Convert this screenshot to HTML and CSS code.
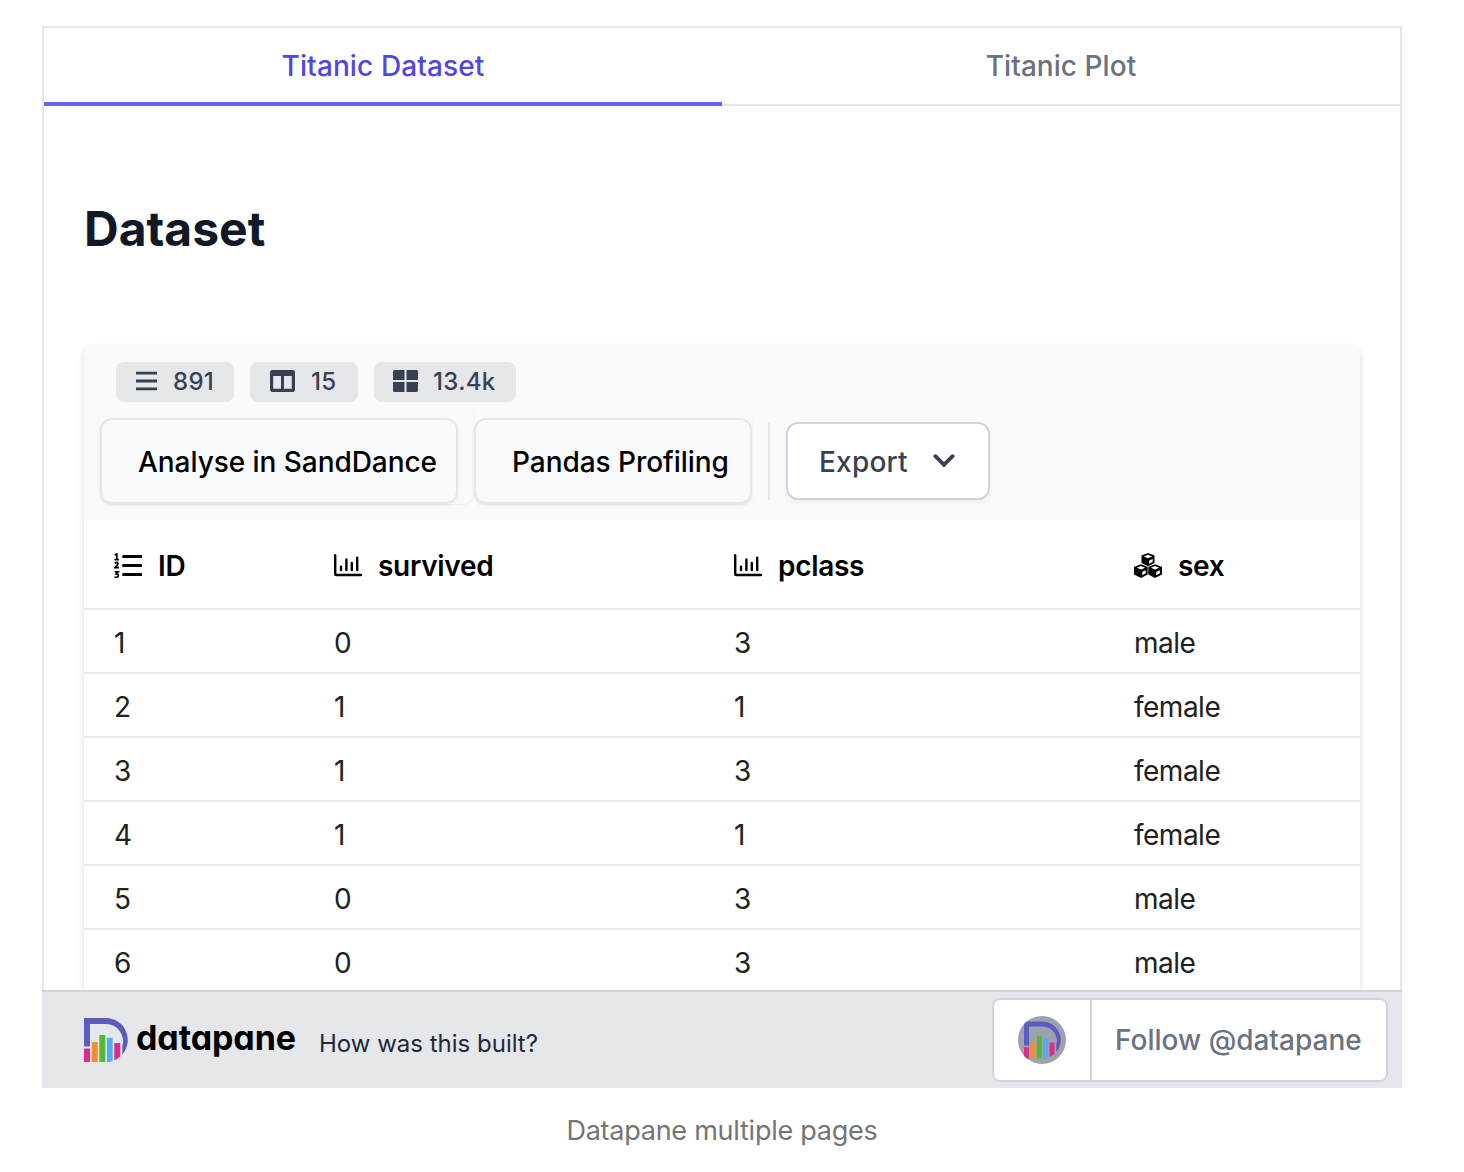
FILE: index.html
```html
<!DOCTYPE html>
<html lang="en">
<head>
<meta charset="utf-8">
<title>Datapane multiple pages</title>
<link rel="stylesheet" href="styles.css">
</head>
<body>
<svg class="defs" aria-hidden="true">
  <symbol id="chart" viewBox="0 0 28 24"><path d="M1.2 1.2V20q0 1 1 1H27" fill="none" stroke="currentColor" stroke-width="2.4" stroke-linecap="round" stroke-linejoin="round"/><path d="M7 12.8V16M12.4 5.4V16M17.8 9V16M23.2 3.8V16" fill="none" stroke="currentColor" stroke-width="2.4" stroke-linecap="round"/></symbol>
  <symbol id="mark" viewBox="0 0 44 44"><path d="M0 0H22A22 22 0 0 1 38.3 36.5V28A17 17 0 0 0 22 6H6V28.600H0Z" fill="#5c5bc0"/><path d="M0 30.500H6V44H0Z" fill="#d92f8a"/><path d="M7.800 24H13.700V44H7.800Z" fill="#f28c35"/><path d="M15.300 17H21.300V44H15.300Z" fill="#58b637"/><path d="M22.900 19.700H28.700V43L26 44H22.900Z" fill="#4faef8"/><path d="M30.300 25H36.300V38.500Q33.500 41 30.300 42.300Z" fill="#d92f8a"/></symbol>
</svg>
<figure class="figure">
  <div class="frame">
    <nav class="tabs"><a class="tab active">Titanic Dataset</a><a class="tab">Titanic Plot</a></nav>
    <main class="content">
      <h1 class="heading">Dataset</h1>
      <section class="card">
        <header class="tools">
          <div class="badges">
            <span class="badge"><svg class="badge-icon rows-icon" viewBox="0 0 22 20"><path d="M0 1.800H22M0 10H22M0 18.200H22" stroke="currentColor" stroke-width="3"/></svg>891</span>
            <span class="badge"><svg class="badge-icon" viewBox="0 0 25 22"><path fill="currentColor" fill-rule="evenodd" d="M2.500 0H22.500Q25 0 25 2.500V19.500Q25 22 22.500 22H2.500Q0 22 0 19.500V2.500Q0 0 2.500 0ZM3.200 6V18.800H11V6ZM14 6V18.800H21.800V6Z"/></svg>15</span>
            <span class="badge"><svg class="badge-icon grid-icon" viewBox="0 0 25 22"><path fill="currentColor" d="M1.500 0H11.500V10H0V1.500Q0 0 1.500 0ZM13.500 0H23.500Q25 0 25 1.500V10H13.500ZM0 12H11.500V22H1.500Q0 22 0 20.500ZM13.500 12H25V20.500Q25 22 23.500 22H13.500Z"/></svg>13.4k</span>
          </div>
          <div class="actions">
            <div class="action-wrap wide"><button class="action sand">Analyse in SandDance</button></div>
            <div class="action-wrap"><button class="action pandas">Pandas Profiling</button></div>
            <span class="separator"></span>
            <button class="export">Export<svg class="chevron" viewBox="0 0 20 14"><path d="M2 3L10 11L18 3" fill="none" stroke="currentColor" stroke-width="3.600" stroke-linecap="round" stroke-linejoin="miter"/></svg></button>
          </div>
        </header>
        <div class="table">
          <div class="row head">
            <div class="cell"><svg class="col-icon" viewBox="0 0 28 26"><path d="M9.500 3.500H27M9.500 12.500H27M9.500 21.500H27" stroke="currentColor" stroke-width="3" stroke-linecap="round"/><path d="M.8 2L2.800 1V6.400M.5 6.700H5M.8 10.300Q3.600 8.400 4 10.600Q4 11.800 1 14.600H5M.8 18.800H4.200L2.200 21Q4.500 21 4.300 22.800Q3.600 25 .5 24" fill="none" stroke="currentColor" stroke-width="1.700"/></svg>ID</div>
            <div class="cell"><svg class="col-icon"><use href="#chart"/></svg>survived</div>
            <div class="cell"><svg class="col-icon"><use href="#chart"/></svg>pclass</div>
            <div class="cell"><svg class="col-icon" viewBox="0 0 28 26"><g fill="#000"><path d="M14 0L20.500 2.600V10L14 13.200L7.500 10V2.600Z"/><path d="M7 11.200L13.700 14V21.500L7 25L0 21.500V14Z"/><path d="M21 11.200L28 14V21.500L21 25L14.300 21.500V14Z"/></g><g fill="#fff"><path d="M14 1.800L18.200 3.500L14 5.200L9.800 3.500ZM15.200 7.500L18.700 6V9L15.200 10.700Z"/><path d="M7 13L11.200 14.700L7 16.500L2.800 14.700ZM8.300 18.700L11.700 17.200V20.300L8.300 22.200Z"/><path d="M21 13L25.200 14.700L21 16.500L16.800 14.700ZM22.300 18.700L25.900 17.200V20.300L22.300 22.200Z"/></g></svg>sex</div>
          </div>
          <div class="row"><div class="cell">1</div><div class="cell">0</div><div class="cell">3</div><div class="cell">male</div></div>
          <div class="row"><div class="cell">2</div><div class="cell">1</div><div class="cell">1</div><div class="cell">female</div></div>
          <div class="row"><div class="cell">3</div><div class="cell">1</div><div class="cell">3</div><div class="cell">female</div></div>
          <div class="row"><div class="cell">4</div><div class="cell">1</div><div class="cell">1</div><div class="cell">female</div></div>
          <div class="row"><div class="cell">5</div><div class="cell">0</div><div class="cell">3</div><div class="cell">male</div></div>
          <div class="row"><div class="cell">6</div><div class="cell">0</div><div class="cell">3</div><div class="cell">male</div></div>
        </div>
      </section>
    </main>
    <footer class="footer">
      <svg class="logo"><use href="#mark"/></svg>
      <span class="wordmark">datapane</span>
      <a class="built">How was this built?</a>
      <div class="follow">
        <span class="avatar-box"><span class="avatar"><svg class="avatar-mark"><use href="#mark"/></svg></span></span>
        <span class="follow-text">Follow @datapane</span>
      </div>
    </footer>
  </div>
  <figcaption class="caption">Datapane multiple pages</figcaption>
</figure>
</body>
</html>
```
FILE: styles.css
```css
* { box-sizing: border-box; }
body { margin: 0; background: #fff; font-family: Inter, "Liberation Sans", sans-serif; }
button { font: inherit; }
svg { display: block; flex: none; }
.defs { display: none; }
.figure { width: 1360px; margin: 26px 0 0 42px; }
.frame { display: flex; flex-direction: column; height: 1062px; border: 2px solid #e5e7eb; border-bottom: 0; }
.tabs { display: flex; height: 78px; flex: none; }
.tab { flex: 1; display: flex; justify-content: center; padding-top: 17px; border-bottom: 2px solid #e5e7eb; color: #6b7280; font-size: 28px; line-height: 42px; font-weight: 550; letter-spacing: .05px; }
.tab.active { color: #4f46e5; border-bottom: 4px solid #6366f1; letter-spacing: .12px; }
.content { flex: 1; min-height: 0; overflow: hidden; padding: 93px 40px 0; }
.heading { margin: 0 0 87px; color: #111827; font-size: 48px; line-height: 60px; font-weight: 700; }
.card { height: 700px; border-radius: 8px; box-shadow: 0 2px 6px rgba(0,0,0,.14); }
.tools { height: 174px; padding: 16px 16px 0; background: #f9fafb; border-radius: 8px 8px 0 0; }
.badges { display: flex; gap: 16px; padding-left: 16px; }
.badge { display: flex; align-items: center; height: 40px; padding: 0 20px; border-radius: 8px; background: #e5e7eb; color: #374151; font-size: 24px; font-weight: 500; line-height: 40px; letter-spacing: .3px; }
.badge-icon { width: 25px; height: 22px; margin: -2px 16px 0 0; }
.badge:nth-child(2) { width: 108px; }
.rows-icon { width: 21px; height: 20px; }
.grid-icon { margin: -2px 15px 0 -1px; }
.actions { display: flex; height: 102px; align-items: flex-end; }
.action-wrap { height: 102px; padding-top: 16px; border-radius: 12px; box-shadow: 0 1px 2px rgba(0,0,0,.06); }
.wide { width: 374px; }
.action { display: block; height: 86px; padding: 2px 20px 0 36px; border: 2px solid #e5e7eb; border-radius: 12px; background: #f9fafb; color: #000; font-size: 28px; font-weight: 500; text-align: left; white-space: nowrap; letter-spacing: -.05px; box-shadow: 0 2px 4px rgba(0,0,0,.05); }
.sand { width: 358px; }
.pandas { width: 278px; }
.separator { width: 2px; height: 78px; margin: 0 16px 4px; background: #e5e7eb; }
.export { display: flex; align-items: center; width: 204px; height: 78px; margin-bottom: 4px; padding: 2px 31px 0; border: 2px solid #d1d5db; border-radius: 12px; background: #fff; color: #374151; font-size: 28px; font-weight: 500; letter-spacing: .2px; box-shadow: 0 2px 4px rgba(0,0,0,.06); }
.chevron { width: 22px; height: 15px; margin: -3px 0 0 25px; }
.row { display: grid; grid-template-columns: 220px 400px 400px 1fr; height: 64px; border-bottom: 2px solid #ededee; color: #212121; font-size: 28px; letter-spacing: -.5px; }
.head { height: 90px; color: #000; font-weight: 600; letter-spacing: -.3px; }
.cell { display: flex; align-items: center; padding: 4px 0 0 30px; }
.head .cell { padding-top: 4px; }
.col-icon { width: 28px; height: 26px; margin-right: 16px; margin-top: 0; }
.footer { flex: none; display: flex; align-items: center; height: 98px; margin: 0 -2px; padding: 0 14px 0 42px; border-top: 2px solid #d1d5db; background: #e5e7eb; }
.logo { width: 44px; height: 44px; }
.wordmark { width: 160px; margin: -4px 0 0 8px; color: #000; font-size: 34px; font-weight: 650; font-feature-settings: "cv11" 1; line-height: 44px; letter-spacing: -.1px; }
.built { margin: 6px 0 0 23px; color: #1f2937; font-size: 24px; letter-spacing: 0; }
.follow { display: flex; width: 396px; height: 84px; margin-left: auto; border: 2px solid #d1d5db; border-radius: 8px; background: #fff; overflow: hidden; }
.avatar-box { display: flex; align-items: center; justify-content: center; width: 98px; border-right: 2px solid #d1d5db; }
.avatar { display: flex; align-items: center; justify-content: center; width: 48px; height: 48px; border-radius: 50%; background: #9ca3af; overflow: hidden; }
.avatar-mark { width: 37px; height: 38px; }
.follow-text { display: flex; align-items: center; padding-left: 23px; color: #6b7280; font-size: 28px; font-weight: 550; letter-spacing: 0; }
.caption { padding-top: 22px; color: #757575; font-size: 27px; line-height: 42px; letter-spacing: -.25px; text-align: center; }
```
